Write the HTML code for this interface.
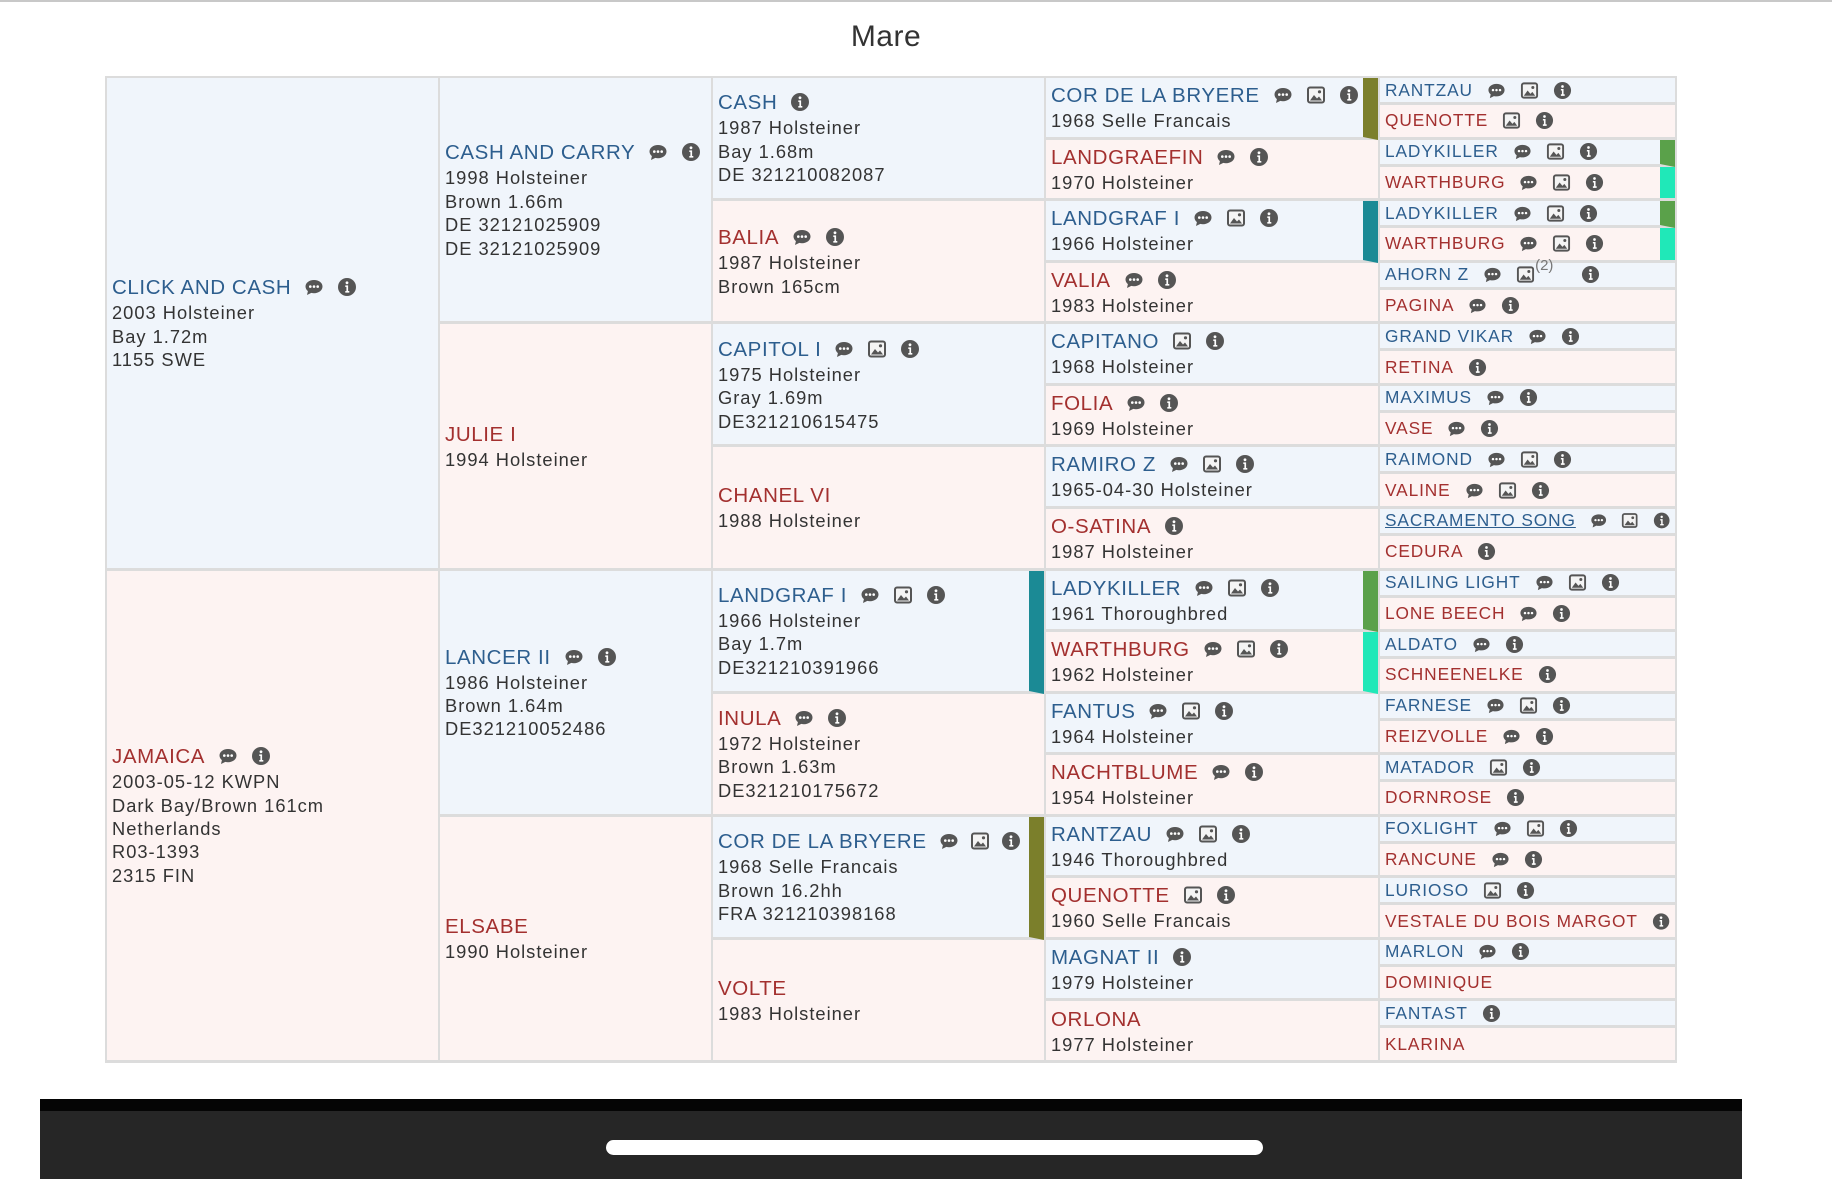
<!DOCTYPE html>
<html><head><meta charset="utf-8">
<style>
html,body{margin:0;padding:0;background:#fff;width:1832px;height:1179px;overflow:hidden;font-family:"Liberation Sans",sans-serif}
.topline{position:absolute;left:0;top:0;width:1832px;height:2px;background:#c8c8c8}
.title{position:absolute;left:0;width:1772px;top:20px;text-align:center;font-size:30px;color:#333;letter-spacing:.5px}
.col{position:absolute;top:76px;height:987px;display:flex;flex-direction:column;border-right:2px solid #dcdcdc;border-top:2px solid #dcdcdc;box-sizing:border-box}
.cell{position:relative;box-sizing:border-box;border-bottom:3px solid #dcdcdc;display:flex;flex-direction:column;justify-content:center;padding:0 5px;overflow:hidden;flex:1 1 0}
.m{background:#f0f5fb}.f{background:#fdf3f2}
.n{font-size:20.5px;letter-spacing:.6px;line-height:27px;white-space:nowrap}
.m .n,.m .n5{color:#2d5e8e}.f .n,.f .n5{color:#a3302f}
.d{font-size:18.3px;letter-spacing:1px;line-height:23.4px;color:#333;white-space:nowrap}
.pair{flex:1 1 0;display:flex;flex-direction:column;box-sizing:border-box;border-bottom:3px solid #dcdcdc}
.g5{box-sizing:border-box;display:flex;align-items:center;padding:0 5px;white-space:nowrap}
.g5.m{height:27px;border-bottom:3px solid #dcdcdc}
.g5.f{flex:1}
.n5{font-size:17.3px;letter-spacing:.9px}
.ic{width:20px;height:20px;margin-left:13px;vertical-align:-3px}
.g5 .ic{width:19px;height:19px;margin-left:14px}
.sup{font-size:15px;color:#777;position:relative;top:-9px;margin-right:14px}
.bo{border-right:15px solid #7b7f2b}.bt{border-right:15px solid #1b8a95}.bg{border-right:15px solid #5aa14a}.ba{border-right:15px solid #20e8b8}
.dark{position:absolute;left:40px;top:1099px;width:1702px;height:80px;background:#262626;border-top:12px solid #050505;box-sizing:border-box}
.pill{position:absolute;left:606px;top:1140px;width:657px;height:15px;background:#fff;border-radius:8px}
.u{text-decoration:underline}
</style></head><body>
<svg width="0" height="0" style="position:absolute">
<symbol id="c" viewBox="0 0 20 20"><path d="M10 3C5 3 1.5 6 1.5 9.5c0 1.8.9 3.4 2.4 4.6L3 18l4.3-2.1c.9.2 1.8.3 2.7.3 5 0 8.5-3 8.5-6.7S15 3 10 3z" fill="#555"/><circle cx="6.3" cy="9.6" r="1.3" fill="#fff"/><circle cx="10" cy="9.6" r="1.3" fill="#fff"/><circle cx="13.7" cy="9.6" r="1.3" fill="#fff"/></symbol>
<symbol id="p" viewBox="0 0 20 20"><rect x="2" y="2.5" width="16" height="15" rx="2" fill="#f4f4f4" stroke="#555" stroke-width="2"/><path d="M4 15.5l4-5.5 3 3.5 2-2 3 4z" fill="#555"/><circle cx="13.5" cy="6.8" r="1.6" fill="#555"/></symbol>
<symbol id="i" viewBox="0 0 20 20"><circle cx="10" cy="10" r="9" fill="#555"/><circle cx="10" cy="5.8" r="1.4" fill="#fff"/><path d="M8.3 8.4h2.8v5.6h1.2v1.6H8.3V14h1.1v-4H8.3z" fill="#fff"/></symbol>
</svg>
<div class="topline"></div>
<div class="title">Mare</div>

<div class="col" style="left:105px;width:335px;border-left:2px solid #dcdcdc">
<div class="cell m"><div class="n">CLICK AND CASH<svg class="ic"><use href="#c"/></svg><svg class="ic"><use href="#i"/></svg></div><div class="d">2003 Holsteiner</div><div class="d">Bay 1.72m</div><div class="d">1155 SWE</div></div>
<div class="cell f"><div class="n">JAMAICA<svg class="ic"><use href="#c"/></svg><svg class="ic"><use href="#i"/></svg></div><div class="d">2003-05-12 KWPN</div><div class="d">Dark Bay/Brown 161cm</div><div class="d">Netherlands</div><div class="d">R03-1393</div><div class="d">2315 FIN</div></div>
</div>

<div class="col" style="left:440px;width:273px">
<div class="cell m"><div class="n">CASH AND CARRY<svg class="ic"><use href="#c"/></svg><svg class="ic"><use href="#i"/></svg></div><div class="d">1998 Holsteiner</div><div class="d">Brown 1.66m</div><div class="d">DE 32121025909</div><div class="d">DE 32121025909</div></div>
<div class="cell f"><div class="n">JULIE I</div><div class="d">1994 Holsteiner</div></div>
<div class="cell m"><div class="n">LANCER II<svg class="ic"><use href="#c"/></svg><svg class="ic"><use href="#i"/></svg></div><div class="d">1986 Holsteiner</div><div class="d">Brown 1.64m</div><div class="d">DE321210052486</div></div>
<div class="cell f"><div class="n">ELSABE</div><div class="d">1990 Holsteiner</div></div>
</div>

<div class="col" style="left:713px;width:333px">
<div class="cell m"><div class="n">CASH<svg class="ic"><use href="#i"/></svg></div><div class="d">1987 Holsteiner</div><div class="d">Bay 1.68m</div><div class="d">DE 321210082087</div></div>
<div class="cell f"><div class="n">BALIA<svg class="ic"><use href="#c"/></svg><svg class="ic"><use href="#i"/></svg></div><div class="d">1987 Holsteiner</div><div class="d">Brown 165cm</div></div>
<div class="cell m"><div class="n">CAPITOL I<svg class="ic"><use href="#c"/></svg><svg class="ic"><use href="#p"/></svg><svg class="ic"><use href="#i"/></svg></div><div class="d">1975 Holsteiner</div><div class="d">Gray 1.69m</div><div class="d">DE321210615475</div></div>
<div class="cell f"><div class="n">CHANEL VI</div><div class="d">1988 Holsteiner</div></div>
<div class="cell m bt"><div class="n">LANDGRAF I<svg class="ic"><use href="#c"/></svg><svg class="ic"><use href="#p"/></svg><svg class="ic"><use href="#i"/></svg></div><div class="d">1966 Holsteiner</div><div class="d">Bay 1.7m</div><div class="d">DE321210391966</div></div>
<div class="cell f"><div class="n">INULA<svg class="ic"><use href="#c"/></svg><svg class="ic"><use href="#i"/></svg></div><div class="d">1972 Holsteiner</div><div class="d">Brown 1.63m</div><div class="d">DE321210175672</div></div>
<div class="cell m bo"><div class="n">COR DE LA BRYERE<svg class="ic" style="margin-left:12px"><use href="#c"/></svg><svg class="ic" style="margin-left:11px"><use href="#p"/></svg><svg class="ic" style="margin-left:11px"><use href="#i"/></svg></div><div class="d">1968 Selle Francais</div><div class="d">Brown 16.2hh</div><div class="d">FRA 321210398168</div></div>
<div class="cell f"><div class="n">VOLTE</div><div class="d">1983 Holsteiner</div></div>
</div>

<div class="col" style="left:1046px;width:334px">
<div class="cell m bo"><div class="n">COR DE LA BRYERE<svg class="ic"><use href="#c"/></svg><svg class="ic"><use href="#p"/></svg><svg class="ic"><use href="#i"/></svg></div><div class="d">1968 Selle Francais</div></div>
<div class="cell f"><div class="n">LANDGRAEFIN<svg class="ic"><use href="#c"/></svg><svg class="ic"><use href="#i"/></svg></div><div class="d">1970 Holsteiner</div></div>
<div class="cell m bt"><div class="n">LANDGRAF I<svg class="ic"><use href="#c"/></svg><svg class="ic"><use href="#p"/></svg><svg class="ic"><use href="#i"/></svg></div><div class="d">1966 Holsteiner</div></div>
<div class="cell f"><div class="n">VALIA<svg class="ic"><use href="#c"/></svg><svg class="ic"><use href="#i"/></svg></div><div class="d">1983 Holsteiner</div></div>
<div class="cell m"><div class="n">CAPITANO<svg class="ic"><use href="#p"/></svg><svg class="ic"><use href="#i"/></svg></div><div class="d">1968 Holsteiner</div></div>
<div class="cell f"><div class="n">FOLIA<svg class="ic"><use href="#c"/></svg><svg class="ic"><use href="#i"/></svg></div><div class="d">1969 Holsteiner</div></div>
<div class="cell m"><div class="n">RAMIRO Z<svg class="ic"><use href="#c"/></svg><svg class="ic"><use href="#p"/></svg><svg class="ic"><use href="#i"/></svg></div><div class="d">1965-04-30 Holsteiner</div></div>
<div class="cell f"><div class="n">O-SATINA<svg class="ic"><use href="#i"/></svg></div><div class="d">1987 Holsteiner</div></div>
<div class="cell m bg"><div class="n">LADYKILLER<svg class="ic"><use href="#c"/></svg><svg class="ic"><use href="#p"/></svg><svg class="ic"><use href="#i"/></svg></div><div class="d">1961 Thoroughbred</div></div>
<div class="cell f ba"><div class="n">WARTHBURG<svg class="ic"><use href="#c"/></svg><svg class="ic"><use href="#p"/></svg><svg class="ic"><use href="#i"/></svg></div><div class="d">1962 Holsteiner</div></div>
<div class="cell m"><div class="n">FANTUS<svg class="ic"><use href="#c"/></svg><svg class="ic"><use href="#p"/></svg><svg class="ic"><use href="#i"/></svg></div><div class="d">1964 Holsteiner</div></div>
<div class="cell f"><div class="n">NACHTBLUME<svg class="ic"><use href="#c"/></svg><svg class="ic"><use href="#i"/></svg></div><div class="d">1954 Holsteiner</div></div>
<div class="cell m"><div class="n">RANTZAU<svg class="ic"><use href="#c"/></svg><svg class="ic"><use href="#p"/></svg><svg class="ic"><use href="#i"/></svg></div><div class="d">1946 Thoroughbred</div></div>
<div class="cell f"><div class="n">QUENOTTE<svg class="ic"><use href="#p"/></svg><svg class="ic"><use href="#i"/></svg></div><div class="d">1960 Selle Francais</div></div>
<div class="cell m"><div class="n">MAGNAT II<svg class="ic"><use href="#i"/></svg></div><div class="d">1979 Holsteiner</div></div>
<div class="cell f"><div class="n">ORLONA</div><div class="d">1977 Holsteiner</div></div>
</div>

<div class="col" style="left:1380px;width:297px">
<div class="pair"><div class="g5 m"><span class="n5">RANTZAU</span><svg class="ic"><use href="#c"/></svg><svg class="ic"><use href="#p"/></svg><svg class="ic"><use href="#i"/></svg></div><div class="g5 f"><span class="n5">QUENOTTE</span><svg class="ic"><use href="#p"/></svg><svg class="ic"><use href="#i"/></svg></div></div>
<div class="pair"><div class="g5 m bg"><span class="n5">LADYKILLER</span><svg class="ic"><use href="#c"/></svg><svg class="ic"><use href="#p"/></svg><svg class="ic"><use href="#i"/></svg></div><div class="g5 f ba"><span class="n5">WARTHBURG</span><svg class="ic"><use href="#c"/></svg><svg class="ic"><use href="#p"/></svg><svg class="ic"><use href="#i"/></svg></div></div>
<div class="pair"><div class="g5 m bg"><span class="n5">LADYKILLER</span><svg class="ic"><use href="#c"/></svg><svg class="ic"><use href="#p"/></svg><svg class="ic"><use href="#i"/></svg></div><div class="g5 f ba"><span class="n5">WARTHBURG</span><svg class="ic"><use href="#c"/></svg><svg class="ic"><use href="#p"/></svg><svg class="ic"><use href="#i"/></svg></div></div>
<div class="pair"><div class="g5 m"><span class="n5">AHORN Z</span><svg class="ic"><use href="#c"/></svg><svg class="ic"><use href="#p"/></svg><span class="sup">(2)</span><svg class="ic"><use href="#i"/></svg></div><div class="g5 f"><span class="n5">PAGINA</span><svg class="ic"><use href="#c"/></svg><svg class="ic"><use href="#i"/></svg></div></div>
<div class="pair"><div class="g5 m"><span class="n5">GRAND VIKAR</span><svg class="ic"><use href="#c"/></svg><svg class="ic"><use href="#i"/></svg></div><div class="g5 f"><span class="n5">RETINA</span><svg class="ic"><use href="#i"/></svg></div></div>
<div class="pair"><div class="g5 m"><span class="n5">MAXIMUS</span><svg class="ic"><use href="#c"/></svg><svg class="ic"><use href="#i"/></svg></div><div class="g5 f"><span class="n5">VASE</span><svg class="ic"><use href="#c"/></svg><svg class="ic"><use href="#i"/></svg></div></div>
<div class="pair"><div class="g5 m"><span class="n5">RAIMOND</span><svg class="ic"><use href="#c"/></svg><svg class="ic"><use href="#p"/></svg><svg class="ic"><use href="#i"/></svg></div><div class="g5 f"><span class="n5">VALINE</span><svg class="ic"><use href="#c"/></svg><svg class="ic"><use href="#p"/></svg><svg class="ic"><use href="#i"/></svg></div></div>
<div class="pair"><div class="g5 m"><span class="n5 u">SACRAMENTO SONG</span><svg class="ic"><use href="#c"/></svg><svg class="ic"><use href="#p"/></svg><svg class="ic"><use href="#i"/></svg></div><div class="g5 f"><span class="n5">CEDURA</span><svg class="ic"><use href="#i"/></svg></div></div>
<div class="pair"><div class="g5 m"><span class="n5">SAILING LIGHT</span><svg class="ic"><use href="#c"/></svg><svg class="ic"><use href="#p"/></svg><svg class="ic"><use href="#i"/></svg></div><div class="g5 f"><span class="n5">LONE BEECH</span><svg class="ic"><use href="#c"/></svg><svg class="ic"><use href="#i"/></svg></div></div>
<div class="pair"><div class="g5 m"><span class="n5">ALDATO</span><svg class="ic"><use href="#c"/></svg><svg class="ic"><use href="#i"/></svg></div><div class="g5 f"><span class="n5">SCHNEENELKE</span><svg class="ic"><use href="#i"/></svg></div></div>
<div class="pair"><div class="g5 m"><span class="n5">FARNESE</span><svg class="ic"><use href="#c"/></svg><svg class="ic"><use href="#p"/></svg><svg class="ic"><use href="#i"/></svg></div><div class="g5 f"><span class="n5">REIZVOLLE</span><svg class="ic"><use href="#c"/></svg><svg class="ic"><use href="#i"/></svg></div></div>
<div class="pair"><div class="g5 m"><span class="n5">MATADOR</span><svg class="ic"><use href="#p"/></svg><svg class="ic"><use href="#i"/></svg></div><div class="g5 f"><span class="n5">DORNROSE</span><svg class="ic"><use href="#i"/></svg></div></div>
<div class="pair"><div class="g5 m"><span class="n5">FOXLIGHT</span><svg class="ic"><use href="#c"/></svg><svg class="ic"><use href="#p"/></svg><svg class="ic"><use href="#i"/></svg></div><div class="g5 f"><span class="n5">RANCUNE</span><svg class="ic"><use href="#c"/></svg><svg class="ic"><use href="#i"/></svg></div></div>
<div class="pair"><div class="g5 m"><span class="n5">LURIOSO</span><svg class="ic"><use href="#p"/></svg><svg class="ic"><use href="#i"/></svg></div><div class="g5 f"><span class="n5">VESTALE DU BOIS MARGOT</span><svg class="ic"><use href="#i"/></svg></div></div>
<div class="pair"><div class="g5 m"><span class="n5">MARLON</span><svg class="ic"><use href="#c"/></svg><svg class="ic"><use href="#i"/></svg></div><div class="g5 f"><span class="n5">DOMINIQUE</span></div></div>
<div class="pair"><div class="g5 m"><span class="n5">FANTAST</span><svg class="ic"><use href="#i"/></svg></div><div class="g5 f"><span class="n5">KLARINA</span></div></div>
</div>

<div class="dark"></div>
<div class="pill"></div>
</body></html>
